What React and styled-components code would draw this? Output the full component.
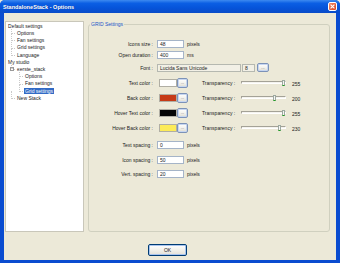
import React from 'react';
import styled, { createGlobalStyle } from 'styled-components';

const GlobalStyle = createGlobalStyle`
  html, body {
    margin: 0;
    padding: 0;
    background: #ECE9D8;
  }
  * { box-sizing: border-box; }
`;

const font = `'Liberation Sans', Arial, sans-serif`;

const tree = [
  { label: 'Default settings', level: 0 },
  { label: 'Options', level: 1 },
  { label: 'Fan settings', level: 1 },
  { label: 'Grid settings', level: 1 },
  { label: 'Language', level: 1 },
  { label: 'My studio', level: 0 },
  { label: 'eerste_stack', level: 1, expander: true },
  { label: 'Options', level: 2 },
  { label: 'Fan settings', level: 2 },
  { label: 'Grid settings', level: 2, selected: true },
  { label: 'New Stack', level: 1 },
];

const colors = [
  { label: 'Text color :', swatch: '#FFFFFF', value: 255 },
  { label: 'Back color :', swatch: '#C63A16', value: 200 },
  { label: 'Hover Text color :', swatch: '#050505', value: 255 },
  { label: 'Hover Back color :', swatch: '#FCEB58', value: 230 },
];

const spacings = [
  { label: 'Text spacing :', value: '0' },
  { label: 'Icon spacing :', value: '50' },
  { label: 'Vert. spacing :', value: '20' },
];

function Slider({ value }) {
  const left = (value / 255) * 40;
  return (
    <Track>
      <Thumb style={{ left: `${left}px` }} />
    </Track>
  );
}

export default function App() {
  return (
    <>
      <GlobalStyle />
      <Window>
        <TitleBar>
          <Title>StandaloneStack - Options</Title>
          <CloseButton>
            <svg width="5" height="5" viewBox="0 0 5 5">
              <path d="M0.6 0.6 L4.4 4.4 M4.4 0.6 L0.6 4.4" stroke="#fff" strokeWidth="1.1" />
            </svg>
          </CloseButton>
        </TitleBar>
        <Body>
          <Panels>
            <Tree>
              {tree.map((item, i) => (
                <TreeItem key={i} level={item.level}>
                  {item.expander && <Expander>−</Expander>}
                  <ItemText selected={item.selected}>{item.label}</ItemText>
                </TreeItem>
              ))}
            </Tree>
            <GroupBox>
              <Legend>GRID Settings</Legend>
              <Form>
                <Row h={11}>
                  <Label>Icons size :</Label>
                  <TextBox>48</TextBox>
                  <Unit>pixels</Unit>
                </Row>
                <Row h={11}>
                  <Label>Open duration :</Label>
                  <TextBox>400</TextBox>
                  <Unit>ms</Unit>
                </Row>
                <Row h={15}>
                  <Label>Font :</Label>
                  <FontBox>Lucida Sans Unicode</FontBox>
                  <SizeBox>8</SizeBox>
                  <Browse>...</Browse>
                </Row>
                {colors.map((c) => (
                  <Row h={15} key={c.label}>
                    <Label wide>{c.label}</Label>
                    <Swatch color={c.swatch} />
                    <Browse narrow>...</Browse>
                    <TransLabel>Transparency :</TransLabel>
                    <Slider value={c.value} />
                    <Value>{c.value}</Value>
                  </Row>
                ))}
                <Spacings>
                  {spacings.map((s) => (
                    <Row h={14.5} key={s.label}>
                      <Label>{s.label}</Label>
                      <TextBox>{s.value}</TextBox>
                      <Unit>pixels</Unit>
                    </Row>
                  ))}
                </Spacings>
              </Form>
            </GroupBox>
          </Panels>
          <Footer>
            <OkButton>OK</OkButton>
          </Footer>
        </Body>
      </Window>
    </>
  );
}

const Window = styled.div`
  width: 340px;
  height: 263px;
  display: flex;
  flex-direction: column;
  background: #0A4CD0;
  border-radius: 5px 5px 0 0;
  overflow: hidden;
  font-family: ${font};
  font-size: 5px;
  color: #1a1a1a;
`;

const TitleBar = styled.div`
  height: 13px;
  flex: none;
  display: flex;
  align-items: center;
  justify-content: space-between;
  padding: 0 3px 0 3px;
  background: linear-gradient(#3D8AF0 0%, #0B5FE4 25%, #0654DA 60%, #0A4CC8 100%);
`;

const Title = styled.div`
  color: #fff;
  font-weight: bold;
  font-size: 5.6px;
  font-family: ${font};
  text-shadow: 1px 0 0 rgba(0, 0, 40, 0.3);
`;

const CloseButton = styled.div`
  width: 9px;
  height: 9px;
  border-radius: 2px;
  border: 1px solid #fff;
  background: linear-gradient(135deg, #F08A6B, #D8431E);
  display: flex;
  align-items: center;
  justify-content: center;
`;

const Body = styled.div`
  flex: 1;
  margin: 0 4px 3px 4px;
  background: #ECE9D8;
  display: flex;
  flex-direction: column;
  padding: 8px 6px 0 1px;
`;

const Panels = styled.div`
  height: 211px;
  display: flex;
  gap: 4px;
`;

const Tree = styled.div`
  width: 79px;
  flex: none;
  background: #fff;
  border: 1px solid #C9C7BA;
  padding-top: 0.5px;
`;

const TreeItem = styled.div`
  position: relative;
  height: 7.2px;
  line-height: 7.2px;
  display: flex;
  align-items: center;
  padding-left: ${(p) => [1, 10, 18][p.level]}px;
  white-space: nowrap;

  ${(p) => p.level > 0 && `
    &::before {
      content: '';
      position: absolute;
      left: ${p.level === 1 ? 5 : 13}px;
      top: -3.6px;
      width: 3px;
      height: 7.2px;
      border-left: 1px dotted #CACACA;
      border-bottom: 1px dotted #CACACA;
    }
  `}
`;

const Expander = styled.span`
  position: absolute;
  left: 4px;
  top: 1.6px;
  width: 4px;
  height: 4px;
  border: 1px solid #9A9A9A;
  background: #fff;
  font-size: 4px;
  line-height: 2px;
  text-align: center;
  color: #333;
  z-index: 1;
`;

const ItemText = styled.span`
  padding: 0 1px;
  line-height: 6.4px;
  background: ${(p) => (p.selected ? '#316AC5' : 'transparent')};
  color: ${(p) => (p.selected ? '#fff' : '#1a1a1a')};
`;

const GroupBox = styled.fieldset`
  flex: 1;
  margin: 0;
  min-width: 0;
  border: 1px solid #D0D0BF;
  border-radius: 3px;
  padding: 0;
`;

const Legend = styled.legend`
  color: #2155C8;
  font-size: 5px;
  margin-left: 1px;
  padding: 0 1px;
  line-height: 6px;
`;

const Form = styled.div`
  padding-top: 11px;
  display: flex;
  flex-direction: column;
`;

const Row = styled.div`
  height: ${(p) => p.h}px;
  display: flex;
  align-items: center;
`;

const Spacings = styled.div`
  margin-top: 3px;
  display: flex;
  flex-direction: column;
`;

const Label = styled.div`
  width: 64px;
  flex: none;
  text-align: right;
  margin-right: ${(p) => (p.wide ? 6 : 4)}px;
  white-space: nowrap;
`;

const TextBox = styled.div`
  width: 27px;
  height: 8px;
  border: 1px solid #A5B4C8;
  background: #fff;
  padding-left: 2px;
  line-height: 6px;
`;

const Unit = styled.div`
  margin-left: 3px;
`;

const FontBox = styled.div`
  width: 84px;
  height: 8px;
  border: 1px solid #B5B8B0;
  background: #F2F0E6;
  padding-left: 2px;
  line-height: 6px;
`;

const SizeBox = styled(FontBox)`
  width: 13px;
  margin-left: 1px;
`;

const Browse = styled.div`
  width: ${(p) => (p.narrow ? 11 : 12)}px;
  height: ${(p) => (p.narrow ? 10 : 9)}px;
  margin-left: ${(p) => (p.narrow ? 0 : 2)}px;
  border: 1px solid #7C92B8;
  border-radius: 2px;
  background: linear-gradient(#FFFFFF, #F0EFEA 60%, #DCD8CC);
  box-shadow: inset 0 0 0 1px #C7D6F0;
  display: flex;
  align-items: center;
  justify-content: center;
  font-size: 4px;
  color: #555;
  line-height: 1;
`;

const Swatch = styled.div`
  width: 18px;
  height: 8px;
  background: ${(p) => p.color};
  border: 1px solid #B0AEA4;
`;

const TransLabel = styled.div`
  margin-left: 14px;
  width: 39px;
  white-space: nowrap;
`;

const Track = styled.div`
  position: relative;
  width: 45px;
  height: 3px;
  border: 1px solid;
  border-color: #A4A297 #FFFFFF #FFFFFF #A4A297;
  background: #F4F3EE;
`;

const Thumb = styled.div`
  position: absolute;
  top: -2px;
  width: 3px;
  height: 6px;
  background: #F6F6F2;
  border: 1px solid #9CA8A0;
  border-bottom: 1px solid #21A121;
`;

const Value = styled.div`
  margin-left: 6px;
  margin-top: 2px;
`;

const Footer = styled.div`
  display: flex;
  justify-content: center;
  padding-top: 12px;
`;

const OkButton = styled.div`
  width: 39px;
  height: 12px;
  border: 1px solid #003C74;
  border-radius: 2px;
  background: linear-gradient(#FFFFFF, #F2F1EC 50%, #E3E0D6);
  box-shadow: inset 0 0 0 1px #A9C4EE;
  display: flex;
  align-items: center;
  justify-content: center;
  font-size: 5px;
`;
